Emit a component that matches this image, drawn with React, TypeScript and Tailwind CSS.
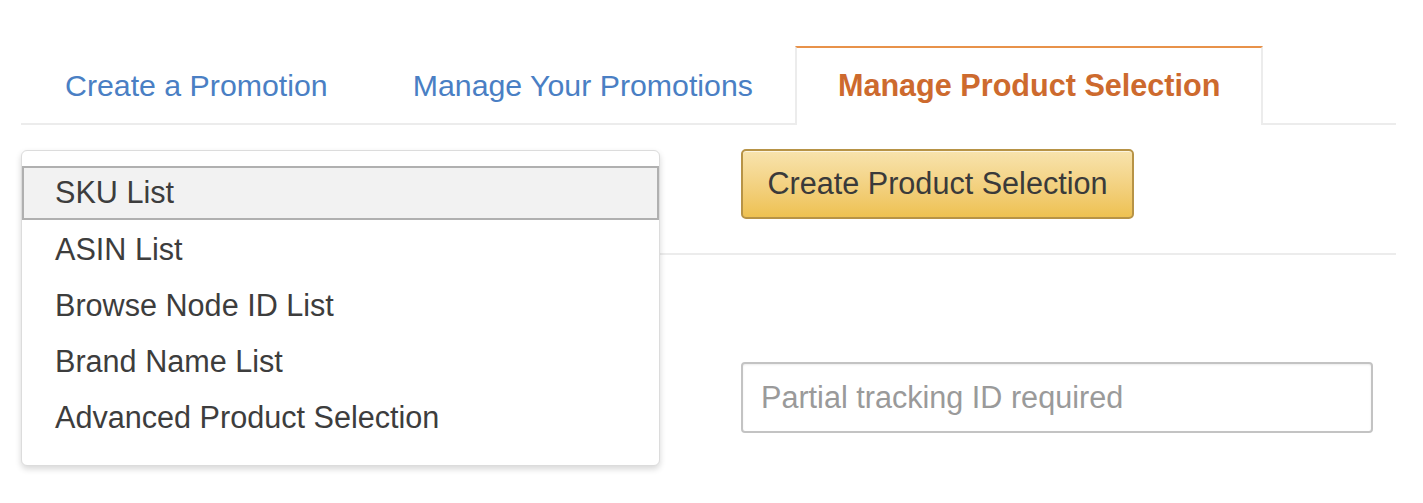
const items = ['SKU List', 'ASIN List', 'Browse Node ID List', 'Brand Name List', 'Advanced Product Selection'];

export default function App() {
	return (
		<div className="h-[503px] bg-white pt-[46px] pl-[21px] pr-[27px] font-['Liberation_Sans',Arial,sans-serif] text-[30.6px] text-[#333]">
			{/* tabs */}
			<div className="flex border-b-2 border-[#ececec]">
				<div className="flex h-[77px] items-center pl-[44px] pr-[41px] pt-[2px] text-[30.3px] text-[#4a7fc4]">
					Create a Promotion
				</div>
				<div className="flex h-[77px] items-center pl-[44px] pr-[42px] pt-[2px] text-[30.3px] text-[#4a7fc4]">
					Manage Your Promotions
				</div>
				<div className="-mb-[2px] flex h-[79px] items-center border-x-2 border-t-2 border-x-[#ececec] border-t-[#e8924a] bg-white px-[41px] pb-[1px] font-bold text-[#cd6a2e]">
					Manage Product Selection
				</div>
			</div>

			{/* content */}
			<div className="relative">
				<div className="flex border-b-2 border-[#ececec] pt-[24px] pb-[34px]">
					<div className="w-[720px]" />
					<button className="h-[70px] w-[393px] rounded-[5px] border-2 border-[#b79346] bg-gradient-to-b from-[#f8e3ad] to-[#eec150] text-[30.6px] text-[#3a3a3a] shadow-[inset_0_1px_0_rgba(255,255,255,0.6)]">
						Create Product Selection
					</button>
				</div>
				<div className="flex pt-[107px]">
					<div className="w-[720px]" />
					<div className="flex h-[71px] w-[632px] items-center rounded-[4px] border-2 border-[#c3c3c3] px-[18px] text-[#9a9a9a] shadow-[inset_0_1px_2px_rgba(0,0,0,0.08)]">
						Partial tracking ID required
					</div>
				</div>

				{/* open dropdown list */}
				<div className="absolute top-[25px] left-0 w-[639px] rounded-[6px] border border-[#dcdcdc] bg-white pt-[15px] pb-[19px] text-[#3d3d3d] shadow-[0_3px_6px_rgba(0,0,0,0.16)]">
					{items.map((item, i) => (
						<div
							key={item}
							className={
								i === 0
									? 'flex h-[54px] items-center border-2 border-[#b0b0b0] bg-[#f2f2f2] pl-[31px]'
									: i === 1
										? 'mt-[2px] flex h-[56px] items-center pl-[33px]'
										: 'flex h-[56px] items-center pl-[33px]'
							}
						>
							{item}
						</div>
					))}
				</div>
			</div>
		</div>
	);
}
